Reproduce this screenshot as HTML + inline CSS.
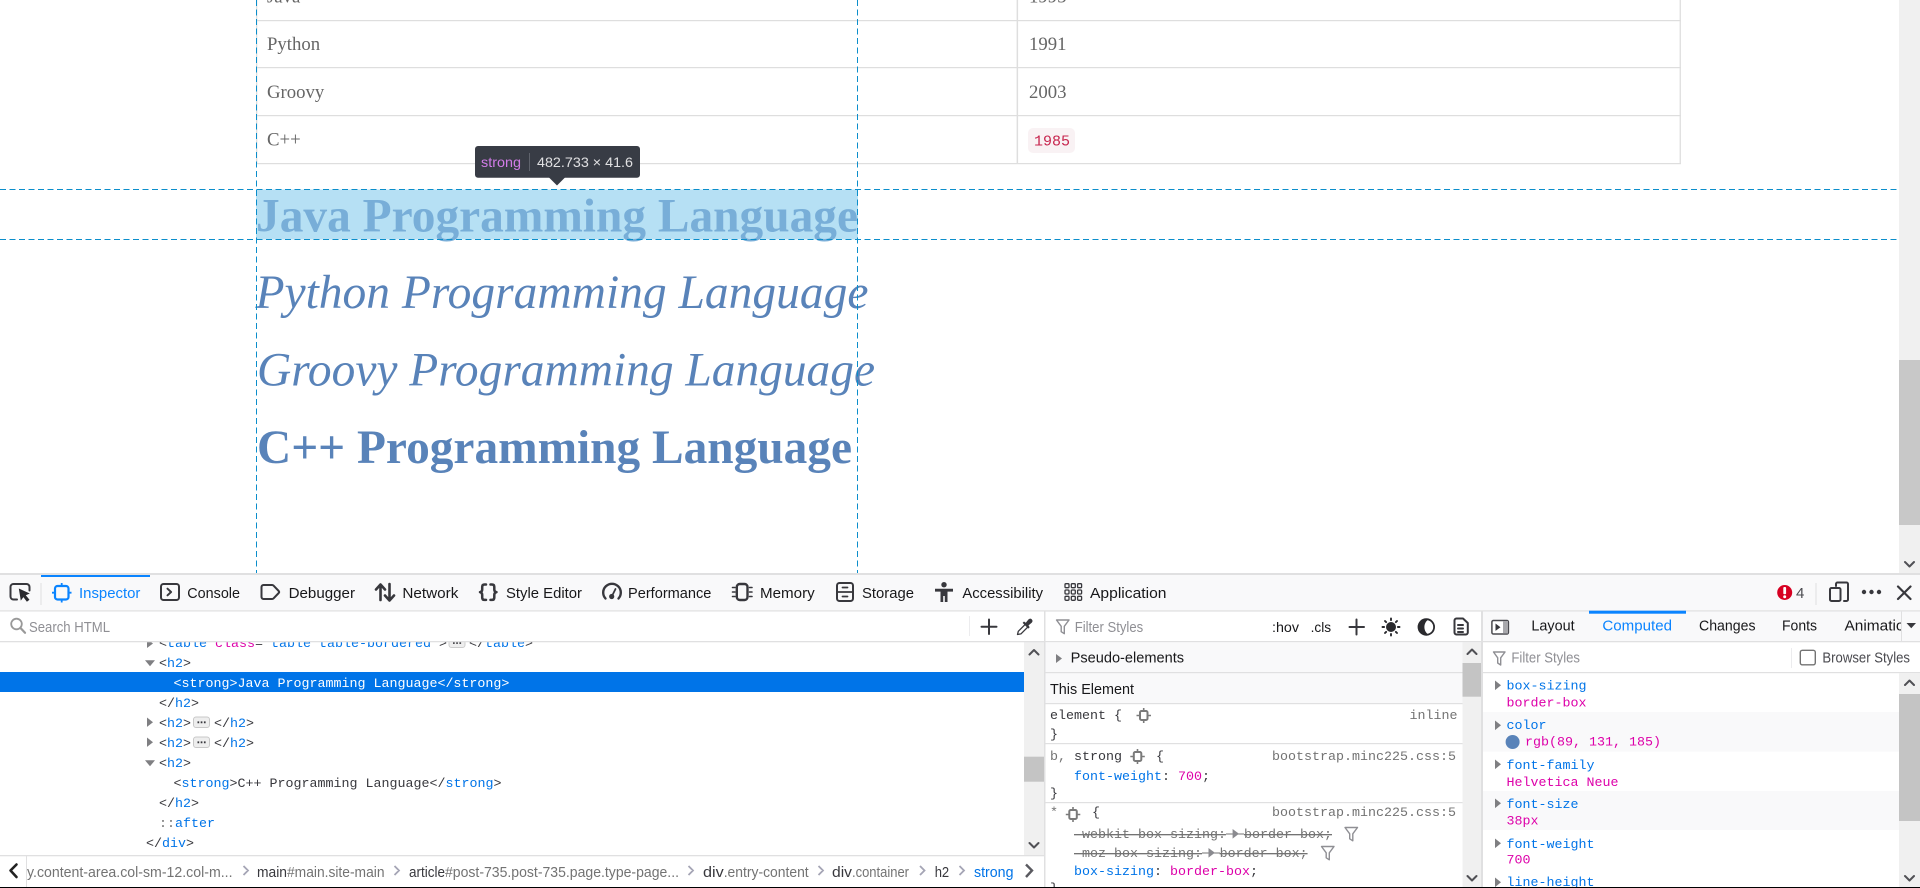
<!DOCTYPE html>
<html lang="en"><head><meta charset="utf-8"><title>Programming Languages</title>
<style>
html,body{margin:0;padding:0;width:1920px;height:888px;overflow:hidden;background:#fff}
svg{display:block}
text{white-space:pre}
.s{font-family:"Liberation Serif",serif;font-size:18.75px;fill:#666}
.h{font-family:"Liberation Serif",serif;font-size:47.5px;fill:#5983b9}
.u{font-family:"Liberation Sans",sans-serif;font-size:15px;fill:#18181a}
.g{font-family:"Liberation Sans",sans-serif;font-size:14.5px;fill:#8f8f94}
.b{font-family:"Liberation Sans",sans-serif;font-size:14.5px;fill:#737373}
.m{font-family:"Liberation Mono",monospace;font-size:13.33px;fill:#38383d}
.t{fill:#0074e8}.p{fill:#dd00a9}.d{fill:#737373}.w{fill:#fff}.k{fill:#38383d}.v{fill:#003eaa}
.i{fill:none;stroke:#38383d;stroke-width:2;stroke-linecap:round;stroke-linejoin:round}
.f{fill:none;stroke:#8f8f94;stroke-width:1.4;stroke-linejoin:round}
.e{fill:none;stroke:#7a7a7a;stroke-width:2}
.a{fill:#7f7f82}
</style></head><body>
<svg xmlns="http://www.w3.org/2000/svg" width="1920" height="888" viewBox="0 0 1920 888">
<!-- page -->
<rect width="1920" height="888" fill="#fff"/>
<g fill="#dedede">
<rect x="256" y="0" width="1.3" height="164"/><rect x="1016.6" y="0" width="1.5" height="164"/><rect x="1679.6" y="0" width="1.3" height="164"/>
<rect x="256" y="20" width="1425" height="1.2"/><rect x="256" y="67" width="1425" height="1.2"/><rect x="256" y="115" width="1425" height="1.2"/><rect x="256" y="163" width="1425" height="1.2"/>
</g>
<text class="s" x="267" y="2.5">Java</text><text class="s" x="1029" y="2.5">1995</text>
<text class="s" x="267" y="50">Python</text><text class="s" x="1029" y="50">1991</text>
<text class="s" x="267" y="98">Groovy</text><text class="s" x="1029" y="98">2003</text>
<text class="s" x="267" y="145.5">C++</text>
<rect x="1028" y="128" width="47" height="25" rx="5" fill="#f9f2f4"/>
<text x="1034" y="145.5" style="font-family:'Liberation Mono',monospace;font-size:15px;fill:#c7254e">1985</text>

<rect x="256" y="189.5" width="602" height="50" fill="#b6e0f4"/>
<text class="h" x="256" y="231.5" style="fill:#78aed8;font-weight:700" textLength="602" lengthAdjust="spacingAndGlyphs">Java Programming Language</text>
<text class="h" x="255.5" y="308" style="font-style:italic" textLength="613" lengthAdjust="spacingAndGlyphs">Python Programming Language</text>
<text class="h" x="257" y="385.5" style="font-style:italic" textLength="618" lengthAdjust="spacingAndGlyphs">Groovy Programming Language</text>
<text class="h" x="257" y="463" style="font-weight:700" textLength="595" lengthAdjust="spacingAndGlyphs">C++ Programming Language</text>

<g stroke="#0b8ecb" stroke-width="1" stroke-dasharray="6 3.5" fill="none">
<path d="M0 189.5H1899M0 239.5H1899M256.5 0V573M857.5 0V573"/>
</g>
<rect x="475" y="146" width="165" height="31.7" rx="3" fill="#383c45"/>
<path d="M549 177.5H565L557 185.5Z" fill="#383c45"/>
<text x="481" y="167" style="font-family:'Liberation Sans',sans-serif;font-size:14px;fill:#d27ce8" textLength="40" lengthAdjust="spacingAndGlyphs">strong</text>
<rect x="529" y="153" width="1" height="18" fill="#5f636c"/>
<text x="537" y="167" style="font-family:'Liberation Sans',sans-serif;font-size:14px;fill:#e0e0e2" textLength="96" lengthAdjust="spacingAndGlyphs">482.733 × 41.6</text>

<!-- page scrollbar -->
<rect x="1899" y="0" width="21" height="573" fill="#f0f0f0"/>
<rect x="1899" y="360" width="21" height="165" fill="#c8c8c8"/>
<path d="M1905 562l4.5 4.5 4.5-4.5" class="i" style="stroke:#505055"/>

<!-- devtools base -->
<rect x="0" y="573" width="1920" height="315" fill="#fff"/>
<rect x="0" y="573" width="1920" height="2" fill="#e0e0e1"/>
<rect x="0" y="575" width="1920" height="36" fill="#f9f9fa"/>
<rect x="0" y="610.3" width="1920" height="1.3" fill="#e0e0e1"/>

<!-- markup -->
<text class="m" x="159" y="647"><tspan class="k">&lt;</tspan><tspan class="t">table</tspan> <tspan class="p">class</tspan><tspan class="k">="</tspan><tspan class="t">table table-bordered</tspan><tspan class="k">"&gt;</tspan></text>
<text class="m" x="469" y="647"><tspan class="k">&lt;/</tspan><tspan class="t">table</tspan><tspan class="k">&gt;</tspan></text>
<rect x="449" y="637" width="16" height="10.5" rx="2.5" fill="#eee" stroke="#ccc"/>
<path d="M453 643h1.7M456.200 643h1.700M459.400 643h1.700" stroke="#38383d" stroke-width="1.800"/>
<path class="a" d="M147 639l6 4.5-6 4.5Z"/>
<path class="a" d="M145 660.3h10l-5 6Z"/>
<text class="m" x="159" y="667"><tspan class="k">&lt;</tspan><tspan class="t">h2</tspan><tspan class="k">&gt;</tspan></text>
<rect x="0" y="672" width="1024" height="20" fill="#0074e8"/>
<text class="m" x="173.5" y="687" style="fill:#fff">&lt;strong&gt;Java Programming Language&lt;/strong&gt;</text>
<text class="m" x="159" y="707"><tspan class="k">&lt;/</tspan><tspan class="t">h2</tspan><tspan class="k">&gt;</tspan></text>
<path class="a" d="M147 717.5l6 4.7-6 4.7Z"/><path class="a" d="M147 737.5l6 4.7-6 4.7Z"/>
<text class="m" x="159" y="727"><tspan class="k">&lt;</tspan><tspan class="t">h2</tspan><tspan class="k">&gt;</tspan></text>
<rect x="193.5" y="717" width="16" height="10.5" rx="2.5" fill="#eee" stroke="#c8c8c8"/>
<path d="M197.5 722.3h1.7M200.7 722.3h1.7M203.9 722.3h1.7" stroke="#38383d" stroke-width="1.8"/>
<text class="m" x="214" y="727"><tspan class="k">&lt;/</tspan><tspan class="t">h2</tspan><tspan class="k">&gt;</tspan></text>
<text class="m" x="159" y="747"><tspan class="k">&lt;</tspan><tspan class="t">h2</tspan><tspan class="k">&gt;</tspan></text>
<rect x="193.5" y="737" width="16" height="10.5" rx="2.5" fill="#eee" stroke="#c8c8c8"/>
<path d="M197.5 742.3h1.7M200.7 742.3h1.7M203.9 742.3h1.7" stroke="#38383d" stroke-width="1.8"/>
<text class="m" x="214" y="747"><tspan class="k">&lt;/</tspan><tspan class="t">h2</tspan><tspan class="k">&gt;</tspan></text>
<path class="a" d="M145 760.3h10l-5 6Z"/>
<text class="m" x="159" y="767"><tspan class="k">&lt;</tspan><tspan class="t">h2</tspan><tspan class="k">&gt;</tspan></text>
<text class="m" x="173.5" y="787"><tspan class="k">&lt;</tspan><tspan class="t">strong</tspan><tspan class="k">&gt;C++ Programming Language&lt;/</tspan><tspan class="t">strong</tspan><tspan class="k">&gt;</tspan></text>
<text class="m" x="159" y="807"><tspan class="k">&lt;/</tspan><tspan class="t">h2</tspan><tspan class="k">&gt;</tspan></text>
<text class="m" x="159" y="827"><tspan class="d">::</tspan><tspan class="t">after</tspan></text>
<text class="m" x="146" y="847"><tspan class="k">&lt;/</tspan><tspan class="t">div</tspan><tspan class="k">&gt;</tspan></text>
<!-- markup scrollbar -->
<rect x="1024" y="642" width="20" height="213" fill="#f0f0f0"/>
<rect x="1024" y="756.7" width="20" height="25" fill="#c4c4c4"/>
<path class="i" style="stroke:#505055" d="M1029.5 654.5l4.5-4.5 4.5 4.5M1029.5 843l4.5 4.5 4.5-4.5"/>

<!-- search row -->
<rect x="0" y="611.6" width="1044" height="30" fill="#fff"/>
<rect x="0" y="641" width="1920" height="1.3" fill="#e0e0e1"/>
<circle cx="16.5" cy="624" r="5.3" fill="none" stroke="#999" stroke-width="1.8"/><path d="M20.5 628l4.5 4.8" stroke="#999" stroke-width="2.2" stroke-linecap="round"/>
<text class="g" x="29" y="632" textLength="81" lengthAdjust="spacingAndGlyphs">Search HTML</text>
<rect x="969" y="616" width="1" height="20" fill="#ececee"/>
<path class="i" stroke-width="1.8" d="M989 619.5v14.5M981.5 626.7h15"/>
<path d="M1017.5 634.5l.8-3.2 7-7 2.6 2.6-7 7Z" fill="none" stroke="#38383d" stroke-width="1.3" stroke-linejoin="round"/>
<path d="M1024 621.5l1.8 1.2 2.6-3.2q1.8-1.6 3.4-.1 1.5 1.6-.1 3.4l-3.2 2.6 1.2 1.8-1.4 1.4-5.7-5.7Z" fill="#38383d"/>

<!-- breadcrumb -->
<rect x="0" y="855" width="1044" height="1.3" fill="#e0e0e1"/>
<path class="i" stroke-width="2.6" style="stroke:#222;stroke-width:2.6" d="M16.5 864.5l-6 6 6 6.5"/>
<rect x="26" y="856" width="1" height="31" fill="#e0e0e1"/>
<text class="b" x="27" y="877" textLength="205.5" lengthAdjust="spacingAndGlyphs">y.content-area.col-sm-12.col-m...</text>
<text class="b" x="257" y="877" style="fill:#38383d" textLength="30" lengthAdjust="spacingAndGlyphs">main</text>
<text class="b" x="287" y="877" textLength="97.5" lengthAdjust="spacingAndGlyphs">#main.site-main</text>
<text class="b" x="409" y="877" style="fill:#38383d" textLength="36" lengthAdjust="spacingAndGlyphs">article</text>
<text class="b" x="445" y="877" textLength="234" lengthAdjust="spacingAndGlyphs">#post-735.post-735.page.type-page...</text>
<text class="b" x="703" y="877" style="fill:#38383d" textLength="20.7" lengthAdjust="spacingAndGlyphs">div</text>
<text class="b" x="723.7" y="877" textLength="85" lengthAdjust="spacingAndGlyphs">.entry-content</text>
<text class="b" x="832" y="877" style="fill:#38383d" textLength="20" lengthAdjust="spacingAndGlyphs">div</text>
<text class="b" x="852" y="877" textLength="57" lengthAdjust="spacingAndGlyphs">.container</text>
<text class="b" x="934.7" y="877" style="fill:#38383d" textLength="14.5" lengthAdjust="spacingAndGlyphs">h2</text>
<text class="b" x="974" y="877" style="fill:#0074e8" textLength="39.5" lengthAdjust="spacingAndGlyphs">strong</text>
<path fill="none" stroke="#a5a5b5" stroke-width="1.8" d="M243.5 866l4.5 4.5-4.5 4.5M394.5 866l4.5 4.5-4.5 4.5M688.5 866l4.5 4.5-4.5 4.5M818.5 866l4.5 4.5-4.5 4.5M920 866l4.5 4.5-4.5 4.5M959.5 866l4.5 4.5-4.5 4.5"/>
<path fill="none" stroke="#5a5a60" stroke-width="2.4" d="M1026 864.5l6 6-6 6.5"/>

<!-- pane dividers -->
<rect x="1044" y="611" width="1.5" height="276" fill="#e0e0e1"/>
<rect x="1481" y="611" width="2" height="276" fill="#e0e0e1"/>

<!-- rules -->
<rect x="1045.5" y="642.3" width="417" height="30" fill="#f9f9fa"/>
<rect x="1045.5" y="672.3" width="417" height="31" fill="#f9f9fa"/>
<rect x="1045.5" y="672" width="417" height="1.2" fill="#e0e0e1"/>
<rect x="1045.5" y="703" width="417" height="1.2" fill="#e0e0e1"/>
<rect x="1045.5" y="743" width="417" height="1.2" fill="#e0e0e1"/>
<rect x="1045.5" y="802" width="417" height="1.2" fill="#e0e0e1"/>
<path class="f" d="M1056.5 620h12.5l-4.7 6.3v7.4l-3.1-2v-5.4Z"/>
<text class="g" x="1074.7" y="632" textLength="68.5" lengthAdjust="spacingAndGlyphs">Filter Styles</text>
<text class="u" x="1272" y="632" style="font-size:14px" textLength="27" lengthAdjust="spacingAndGlyphs">:hov</text>
<text class="u" x="1310.6" y="632" style="font-size:14px" textLength="20.5" lengthAdjust="spacingAndGlyphs">.cls</text>
<path class="i" stroke-width="1.8" d="M1356.5 619.5v15M1349.5 627h14.5"/>
<circle cx="1391" cy="627" r="5" fill="#2a2a2e"/>
<path stroke="#2a2a2e" stroke-width="1.9" stroke-linecap="round" d="M1391 618.5v1.6M1391 633.9v1.6M1382.5 627h1.6M1397.9 627h1.6M1385 621l1.1 1.1M1395.9 631.9l1.1 1.1M1385 633l1.1-1.1M1395.9 622.1l1.1-1.1"/>
<circle cx="1426.3" cy="627" r="7.8" fill="none" stroke="#2a2a2e" stroke-width="1.8"/>
<path d="M1427 619.5a7.5 7.5 0 0 0 0 15a10 10 0 0 1 0-15Z" fill="#2a2a2e" stroke="#2a2a2e" stroke-width="1.5"/>
<path class="i" stroke-width="1.7" d="M1456.5 618.5h6.5l4.8 4.5v9.5a2 2 0 0 1-2 2h-9.3a2 2 0 0 1-2-2v-12a2 2 0 0 1 2-2Z"/>
<path class="i" stroke-width="1.5" d="M1458 625h5M1458 628.5h5M1458 632h5"/>

<path class="a" d="M1056 654l6 4.5-6 4.5Z"/>
<text class="u" x="1070.6" y="662.7" textLength="113.5" lengthAdjust="spacingAndGlyphs">Pseudo-elements</text>
<text class="u" x="1050" y="694" textLength="84" lengthAdjust="spacingAndGlyphs">This Element</text>

<text class="m" x="1050" y="719">element {</text>
<g class="e"><rect x="1140" y="711" width="7.5" height="9" rx="1.5"/><path d="M1143.7 708v3M1143.7 720v3M1136.5 715.5h3.5M1147.5 715.5h3.5" stroke-width="1.6"/></g>
<text class="m" x="1409.5" y="719" style="fill:#737373">inline</text>
<text class="m" x="1050" y="738">}</text>

<text class="m" x="1050" y="760"><tspan class="d">b,</tspan> strong</text>
<g class="e"><rect x="1133.8" y="752" width="7.5" height="9" rx="1.5"/><path d="M1137.5 749v3M1137.5 761v3M1130.3 756.5h3.5M1141.3 756.5h3.5" stroke-width="1.6"/></g>
<text class="m" x="1156" y="760">{</text>
<text class="m" x="1272" y="760" style="fill:#737373">bootstrap.minc225.css:5</text>
<text class="m" x="1074" y="780"><tspan class="t">font-weight</tspan>: <tspan class="p">700</tspan>;</text>
<text class="m" x="1050" y="797">}</text>

<text class="m" x="1050" y="816" style="fill:#737373">*</text>
<g class="e"><rect x="1069.3" y="810" width="7.5" height="9" rx="1.5"/><path d="M1073 807v3M1073 819v3M1065.8 814.5h3.5M1076.8 814.5h3.5" stroke-width="1.6"/></g>
<text class="m" x="1092" y="816">{</text>
<text class="m" x="1272" y="816" style="fill:#737373">bootstrap.minc225.css:5</text>
<text class="m" x="1074" y="838" style="fill:#737373;text-decoration:line-through">-webkit-box-sizing:</text>
<rect x="1226" y="833.500" width="18" height="1" fill="#737373"/>
<text class="m" x="1244" y="838" style="fill:#737373;text-decoration:line-through">border-box;</text>
<path d="M1232.6 829l6.4 4.8-6.4 4.8Z" fill="#8a8a8f"/>
<path class="f" d="M1345 827.5h12.5l-4.7 6.3v7l-3.1-2v-5Z"/>
<text class="m" x="1074" y="857" style="fill:#737373;text-decoration:line-through">-moz-box-sizing:</text>
<rect x="1202" y="852.500" width="18" height="1" fill="#737373"/>
<text class="m" x="1219.6" y="857" style="fill:#737373;text-decoration:line-through">border-box;</text>
<path d="M1208.5 848l6.4 4.8-6.4 4.8Z" fill="#8a8a8f"/>
<path class="f" d="M1321.5 846.5h12.5l-4.7 6.3v7l-3.1-2v-5Z"/>
<text class="m" x="1074" y="875"><tspan class="t">box-sizing</tspan>: <tspan class="p">border-box</tspan>;</text>
<text class="m" x="1050" y="892">}</text>
<!-- rules scrollbar -->
<rect x="1462.5" y="642.3" width="18.5" height="245" fill="#f0f0f0"/>
<rect x="1462.5" y="663" width="18.5" height="33.7" fill="#c4c4c4"/>
<path class="i" style="stroke:#505055" d="M1467.5 654l4.5-4.5 4.5 4.5M1467.5 876l4.5 4.5 4.5-4.5"/>

<!-- computed tabs -->
<rect x="1483" y="611.6" width="437" height="29.4" fill="#f9f9fa"/>
<rect x="1589" y="610.7" width="97" height="3" fill="#0a84ff"/>
<rect x="1491.9" y="620.5" width="16.5" height="13.5" rx="1.5" fill="#fff" stroke="#4a4a4f" stroke-width="1.5"/>
<rect x="1503" y="621" width="5" height="12.5" fill="#a8a8ac"/>
<path d="M1495.5 623.5l5 3.7-5 3.7Z" fill="#38383d"/>
<text class="u" x="1531.4" y="630.7" textLength="43.3" lengthAdjust="spacingAndGlyphs">Layout</text>
<text class="u" x="1602.4" y="630.7" style="fill:#0a84ff" textLength="69.6" lengthAdjust="spacingAndGlyphs">Computed</text>
<text class="u" x="1699" y="630.7" textLength="56.5" lengthAdjust="spacingAndGlyphs">Changes</text>
<text class="u" x="1782" y="630.7" textLength="35" lengthAdjust="spacingAndGlyphs">Fonts</text>
<text class="u" x="1844.5" y="630.7" textLength="60" lengthAdjust="spacingAndGlyphs">Animatio</text>
<rect x="1901" y="611.6" width="1" height="29.4" fill="#e0e0e1"/>
<rect x="1902" y="611.6" width="18" height="29.4" fill="#f9f9fa"/>
<path d="M1906.5 623h9.5l-4.75 5.2Z" fill="#38383d"/>

<!-- computed filter -->
<path class="f" d="M1493.5 652h11.5l-4.3 5.8v7.2l-3-2v-5.2Z"/>
<text class="g" x="1511.4" y="662.3" textLength="68.6" lengthAdjust="spacingAndGlyphs">Filter Styles</text>
<rect x="1791" y="648" width="1" height="20" fill="#ececee"/>
<rect x="1800.3" y="650.3" width="15" height="14.5" rx="2" fill="#fff" stroke="#737373" stroke-width="1.4"/>
<text class="u" x="1822.4" y="662.3" style="fill:#4a4a4f;font-size:14.5px" textLength="87.6" lengthAdjust="spacingAndGlyphs">Browser Styles</text>
<rect x="1483" y="672" width="437" height="1.2" fill="#e0e0e1"/>

<!-- computed list -->
<rect x="1483" y="712" width="416" height="39.7" fill="#f9f9fa"/>
<rect x="1483" y="791" width="416" height="39" fill="#f9f9fa"/>
<path class="a" d="M1495 680.5l6 4.8-6 4.8ZM1495 720.5l6 4.8-6 4.8ZM1495 759.5l6 4.8-6 4.8ZM1495 798.5l6 4.8-6 4.8ZM1495 838.5l6 4.8-6 4.8ZM1495 877.5l6 4.8-6 4.8Z"/>
<text class="m" x="1506.5" y="689.5" style="fill:#0074e8">box-sizing</text>
<text class="m" x="1506.5" y="706.7" style="fill:#dd00a9">border-box</text>
<text class="m" x="1506.5" y="729" style="fill:#0074e8">color</text>
<circle cx="1512.6" cy="742" r="7" fill="#5983b9"/>
<text class="m" x="1525" y="745.7" style="fill:#dd00a9">rgb(89, 131, 185)</text>
<text class="m" x="1506.5" y="769" style="fill:#0074e8">font-family</text>
<text class="m" x="1506.5" y="786" style="fill:#dd00a9">Helvetica Neue</text>
<text class="m" x="1506.5" y="808" style="fill:#0074e8">font-size</text>
<text class="m" x="1506.5" y="824.3" style="fill:#dd00a9">38px</text>
<text class="m" x="1506.5" y="848" style="fill:#0074e8">font-weight</text>
<text class="m" x="1506.5" y="863.3" style="fill:#dd00a9">700</text>
<text class="m" x="1506.5" y="886" style="fill:#0074e8">line-height</text>
<rect x="1899" y="673" width="21" height="214" fill="#f0f0f0"/>
<rect x="1899" y="694" width="21" height="127" fill="#c4c4c4"/>
<path class="i" style="stroke:#505055" d="M1905 685l4.5-4.5 4.5 4.5M1905 876l4.5 4.5 4.5-4.5"/>
<rect x="1902" y="611.6" width="0" height="0" fill="none"/>

<!-- main tabs -->
<rect x="40.5" y="583" width="1" height="22" fill="#dedee0"/>
<rect x="41" y="575" width="109" height="2" fill="#0a84ff"/>
<path class="i" stroke-width="2.2" d="M17 599.5h-3.5a3 3 0 0 1-3-3V587a3 3 0 0 1 3-3h13a3 3 0 0 1 3 3v3.5"/>
<path d="M18.8 588.5l11 5-4 1.8 3.7 4.4-2.6 2-3.5-4.6-2.6 3.5Z" fill="#2a2a2e"/>
<rect x="55" y="586" width="13.5" height="13.5" rx="2.5" fill="none" stroke="#0a84ff" stroke-width="2.2"/>
<path d="M61.7 583v3M61.7 599.5v3M52 592.7h3M68.5 592.7h3" stroke="#0a84ff" stroke-width="1.8"/>
<text class="u" x="79" y="598" style="fill:#0a84ff" textLength="61.4" lengthAdjust="spacingAndGlyphs">Inspector</text>
<rect x="161" y="584" width="18" height="16" rx="2.5" class="i"/>
<path class="i" stroke-width="1.7" d="M167.5 588.7l3.6 3.3-3.6 3.3"/>
<text class="u" x="187.3" y="598" textLength="52.7" lengthAdjust="spacingAndGlyphs">Console</text>
<path class="i" d="M263.5 585h8.5a2 2 0 0 1 1.5.6l5.2 5.4a1.5 1.5 0 0 1 0 2l-5.2 5.4a2 2 0 0 1-1.5.6h-8.5a2 2 0 0 1-2-2v-10a2 2 0 0 1 2-2Z"/>
<text class="u" x="288.6" y="598" textLength="66.4" lengthAdjust="spacingAndGlyphs">Debugger</text>
<path class="i" stroke-width="2.2" style="stroke-width:2.6" d="M380.5 600V585M376 589.5l4.5-5 4.5 5M389.5 584v16M385 595.5l4.5 5 4.5-5"/>
<text class="u" x="402.4" y="598" textLength="56" lengthAdjust="spacingAndGlyphs">Network</text>
<path class="i" style="stroke-width:2.5" d="M486 584.5h-1.5q-2.3 0-2.3 2.3v2.7q0 2.3-2.2 2.7 2.2.4 2.2 2.7v2.7q0 2.3 2.3 2.3h1.500M490.500 584.500h1.500q2.300 0 2.300 2.300v2.700q0 2.300 2.200 2.700-2.200.4-2.200 2.700v2.700q0 2.300-2.300 2.300h-1.500"/>
<text class="u" x="506" y="598" textLength="76" lengthAdjust="spacingAndGlyphs">Style Editor</text>
<path class="i" style="stroke-width:2.400" d="M605.500 598.500a8.800 8.800 0 1 1 13 0"/>
<circle cx="611.700" cy="596.500" r="2.600" fill="#38383d"/><path d="M612 596l3.500-7" stroke="#38383d" stroke-width="1.800" stroke-linecap="round"/>
<text class="u" x="628" y="598" textLength="83.400" lengthAdjust="spacingAndGlyphs">Performance</text>
<rect x="736.800" y="584" width="10.700" height="16" rx="3" class="i" style="stroke-width:2.400"/>
<path class="i" style="stroke-width:1.600" d="M732.500 587.500h2.500M732.500 592h2.500M732.500 596.500h2.500M749.500 587.500h2.500M749.500 592h2.500M749.500 596.500h2.500"/>
<text class="u" x="760" y="598" textLength="54.700" lengthAdjust="spacingAndGlyphs">Memory</text>
<rect x="837" y="583" width="16" height="18" rx="2.500" class="i"/>
<path class="i" style="stroke-width:1.800" d="M837 592h16M842.500 587.500h5M842.500 596.500h5"/>
<text class="u" x="862" y="598" textLength="52" lengthAdjust="spacingAndGlyphs">Storage</text>
<circle cx="944" cy="584.700" r="2.700" fill="#38383d"/>
<path d="M935 588.800h18v2.800h-5.500V602h-2.700v-6h-1.600v6h-2.700V591.600H935Z" fill="#38383d"/>
<text class="u" x="962.400" y="598" textLength="80.600" lengthAdjust="spacingAndGlyphs">Accessibility</text>
<g fill="none" stroke="#38383d" stroke-width="1.300">
<rect x="1065" y="583.700" width="4" height="4" rx="1"/><rect x="1071.300" y="583.700" width="4" height="4" rx="1"/><rect x="1077.600" y="583.700" width="4" height="4" rx="1"/>
<rect x="1065" y="590" width="4" height="4" rx="1"/><rect x="1071.300" y="590" width="4" height="4" rx="1"/><rect x="1077.600" y="590" width="4" height="4" rx="1"/>
<rect x="1065" y="596.300" width="4" height="4" rx="1"/><rect x="1071.300" y="596.300" width="4" height="4" rx="1"/><rect x="1077.600" y="596.300" width="4" height="4" rx="1"/>
</g>
<text class="u" x="1090" y="598" textLength="76.500" lengthAdjust="spacingAndGlyphs">Application</text>

<!-- right tools -->
<circle cx="1784.700" cy="592.500" r="7.500" fill="#d70022"/>
<rect x="1783.300" y="587" width="2.800" height="7.200" rx="1" fill="#fff"/><circle cx="1784.700" cy="596.700" r="1.500" fill="#fff"/>
<text class="u" x="1796" y="598" style="fill:#4a4a4f">4</text>
<rect x="1815.500" y="583" width="1" height="22" fill="#dedee0"/>
<path class="i" d="M1836 586v-2a1.500 1.500 0 0 1 1.500-1.500h9a1.500 1.500 0 0 1 1.500 1.500v15.500a1.500 1.500 0 0 1-1.500 1.500h-2.500"/>
<rect x="1830" y="588" width="10.500" height="13" rx="1.500" class="i"/>
<circle cx="1864" cy="592" r="2.200" fill="#38383d"/><circle cx="1871.500" cy="592" r="2.200" fill="#38383d"/><circle cx="1879" cy="592" r="2.200" fill="#38383d"/>
<path class="i" style="stroke-width:2.200" d="M1898 586.500l12.500 12.500M1910.500 586.500L1898 599"/>

<rect x="0" y="887" width="1920" height="1" fill="#000"/>
</svg>
</body></html>
